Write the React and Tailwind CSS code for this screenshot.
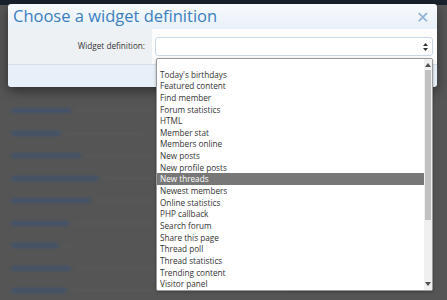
import React from 'react'

const options = [
  '',
  "Today's birthdays",
  'Featured content',
  'Find member',
  'Forum statistics',
  'HTML',
  'Member stat',
  'Members online',
  'New posts',
  'New profile posts',
  'New threads',
  'Newest members',
  'Online statistics',
  'PHP callback',
  'Search forum',
  'Share this page',
  'Thread poll',
  'Thread statistics',
  'Trending content',
  'Visitor panel',
]

// blurred page rows behind the overlay
const rows = [
  { w: 60, tail: 220 },
  { w: 50, tail: 80 },
  { w: 70, tail: 220 },
  { w: 88, tail: 220 },
  { w: 80, tail: 220 },
  { w: 58, tail: 220 },
  { w: 48, tail: 10 },
  { w: 60, tail: 220 },
  { w: 56, tail: 220 },
]

const App = () => {
  return (
    <div className="relative w-[447px] h-[300px] overflow-hidden bg-[#555555] font-['Open_Sans',sans-serif]">
      {/* page behind */}
      <div className="h-[5px] bg-[#18222d]" />
      <div className="flex flex-col gap-[13.5px] pt-[101px] pl-[11px] blur-[1.5px]">
        {rows.map((r, i) => (
          <div key={i} className="flex items-center gap-1 h-[9px]">
            <div className="h-[5px] rounded-sm bg-[#44536a]" style={{ width: r.w }} />
            <div className="h-px bg-[#5e5e5e]" style={{ width: r.tail }} />
          </div>
        ))}
      </div>

      {/* modal */}
      <div className="absolute left-[8px] top-[4px] w-[429px] rounded-[3px] overflow-hidden shadow-[0_4px_12px_rgba(0,0,0,0.45)]">
        <div className="flex items-center justify-between h-[25px] pl-[5px] pr-[8px] bg-gradient-to-b from-[#f7fafd] to-[#e8f0f8]">
          <span className="text-[16.5px] leading-none text-[#3b7fc0]">Choose a widget definition</span>
          <span className="text-[16px] leading-none text-[#8db0d3]">✕</span>
        </div>
        <div className="flex h-[36px] border-b border-[#d6dde5]">
          <div className="w-[144px] bg-[#eef1f4] flex items-center justify-end pr-[7px] text-[8.2px] text-[#333]">
            Widget definition:
          </div>
          <div className="flex-1 bg-[#fdfdfd] flex items-center pl-[3px] pr-[4px]">
            <div className="flex-1 h-[19px] rounded-[3px] border border-[#c9d8e6] bg-white flex items-center justify-end pr-[4px]">
              <svg width="5" height="8" viewBox="0 0 5 8">
                <path d="M2.5 0 L5 3 L0 3 Z M0 5 L5 5 L2.5 8 Z" fill="#333" />
              </svg>
            </div>
          </div>
        </div>
        <div className="h-[22px] bg-[#e7eff8]" />
      </div>

      {/* open dropdown list */}
      <div className="absolute left-[156px] top-[58px] w-[277px] h-[233px] bg-white border border-[#9a9a9a] rounded-[2px] flex shadow-[0_1px_3px_rgba(0,0,0,0.3)]">
        <div className="flex-1 flex flex-col pt-[1.5px] text-[8.2px] text-[#333] leading-[11.67px]">
          {options.map((o, i) => (
            <div
              key={i}
              className={
                'h-[11.67px] pl-[3px] whitespace-nowrap ' +
                (o === 'New threads' ? 'bg-[#777777] text-white' : '')
              }
            >
              {o}
            </div>
          ))}
        </div>
        <div className="w-[8px] bg-[#f0f0f0] flex flex-col items-center">
          <svg width="6" height="6" viewBox="0 0 6 6" className="mt-[3px]">
            <path d="M0 5 L3 1 L6 5 Z" fill="#505050" />
          </svg>
          <div className="mt-[2px] w-[6px] h-[150px] bg-[#c1c1c1]" />
          <div className="flex-1" />
          <svg width="6" height="6" viewBox="0 0 6 6" className="mb-[3px]">
            <path d="M0 1 L6 1 L3 5 Z" fill="#505050" />
          </svg>
        </div>
      </div>
    </div>
  )
}

export default App
